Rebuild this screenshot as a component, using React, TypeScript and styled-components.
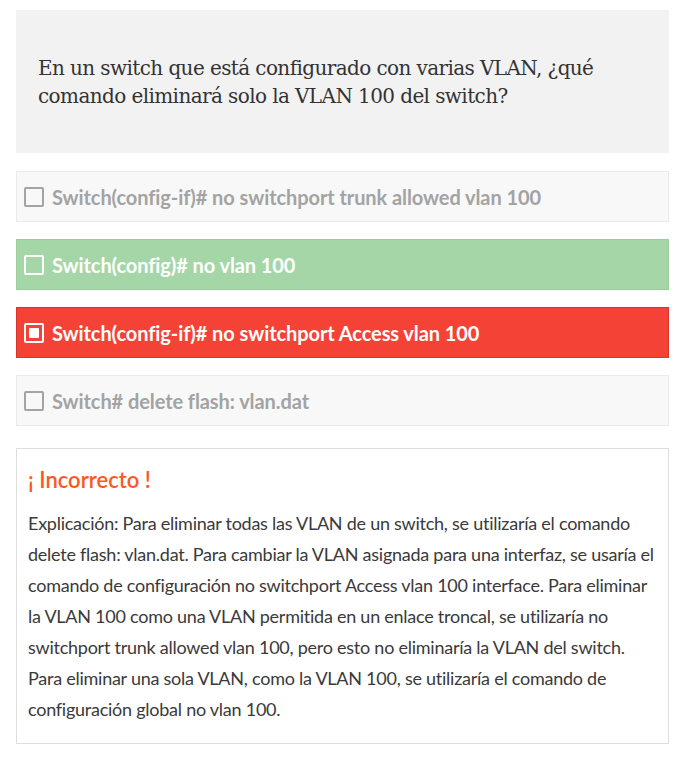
import styled, { createGlobalStyle, css } from "styled-components";

const GlobalStyle = createGlobalStyle`
  body {
    margin: 0;
    background: #fff;
    font-family: Lato, "Open Sans", sans-serif;
  }
  p { margin: 0; }
`;

const Page = styled.div`
  padding: 10px 20px 13px 16px;
  display: flex;
  flex-direction: column;
`;

const Question = styled.div`
  background: #f2f2f2;
  height: 143px;
  box-sizing: border-box;
  padding: 0 22px;
  display: flex;
  align-items: center;
  font-family: "DejaVu Serif", "Liberation Serif", serif;
  font-size: 20px;
  letter-spacing: -0.6px;
  line-height: 28px;
  color: #333;
  margin-bottom: 18px;
`;

const Options = styled.div`
  display: flex;
  flex-direction: column;
  gap: 17px;
  margin-bottom: 22px;
`;

type Variant = "plain" | "good" | "bad";

const Option = styled.div<{ $variant: Variant }>`
  height: 51px;
  box-sizing: border-box;
  display: flex;
  align-items: center;
  gap: 8px;
  padding: 0 7px;
  border: 1px solid #ebebeb;
  background: #f8f8f8;
  color: #a3a3a3;
  font-size: 20px;
  font-weight: 700;
  letter-spacing: -0.08px;
  ${(p) =>
    p.$variant === "good" &&
    css`
      background: #a5d6a7;
      border-color: #9ccc9e;
      color: #fff;
    `}
  ${(p) =>
    p.$variant === "bad" &&
    css`
      background: #f44336;
      border-color: #d8342a;
      color: #fff;
    `}
`;

const Box = styled.span<{ $checked: boolean }>`
  width: 20px;
  height: 20px;
  box-sizing: border-box;
  border: 2px solid currentColor;
  border-radius: 2px;
  flex-shrink: 0;
  display: flex;
  align-items: center;
  justify-content: center;
  &::after {
    content: "";
    display: ${(p) => (p.$checked ? "block" : "none")};
    width: 10px;
    height: 10px;
    background: currentColor;
    border-radius: 1px;
  }
`;

const Feedback = styled.div`
  border: 1px solid #dedede;
  padding: 17px 10px 18px 11px;
`;

const Verdict = styled.h3`
  margin: 0 0 14px;
  color: #ff5722;
  font-size: 22px;
  font-weight: 600;
  line-height: 28px;
`;

const Explanation = styled.p`
  color: #3a3a3a;
  font-size: 18px;
  line-height: 31px;
  letter-spacing: -0.25px;
`;

const options: { text: string; variant: Variant; checked: boolean }[] = [
  { text: "Switch(config-if)# no switchport trunk allowed vlan 100", variant: "plain", checked: false },
  { text: "Switch(config)# no vlan 100", variant: "good", checked: false },
  { text: "Switch(config-if)# no switchport Access vlan 100", variant: "bad", checked: true },
  { text: "Switch# delete flash: vlan.dat", variant: "plain", checked: false },
];

export default function App() {
  return (
    <>
      <GlobalStyle />
      <Page>
        <Question>
          En un switch que está configurado con varias VLAN, ¿qué comando eliminará solo la VLAN 100 del switch?
        </Question>
        <Options>
          {options.map((o) => (
            <Option key={o.text} $variant={o.variant}>
              <Box $checked={o.checked} />
              {o.text}
            </Option>
          ))}
        </Options>
        <Feedback>
          <Verdict>¡ Incorrecto !</Verdict>
          <Explanation>
            Explicación: Para eliminar todas las VLAN de un switch, se utilizaría el comando delete flash: vlan.dat. Para
            cambiar la VLAN asignada para una interfaz, se usaría el comando de configuración no switchport Access vlan 100
            interface. Para eliminar la VLAN 100 como una VLAN permitida en un enlace troncal, se utilizaría no switchport
            trunk allowed vlan 100, pero esto no eliminaría la VLAN del switch. Para eliminar una sola VLAN, como la VLAN
            100, se utilizaría el comando de configuración global no vlan 100.
          </Explanation>
        </Feedback>
      </Page>
    </>
  );
}
